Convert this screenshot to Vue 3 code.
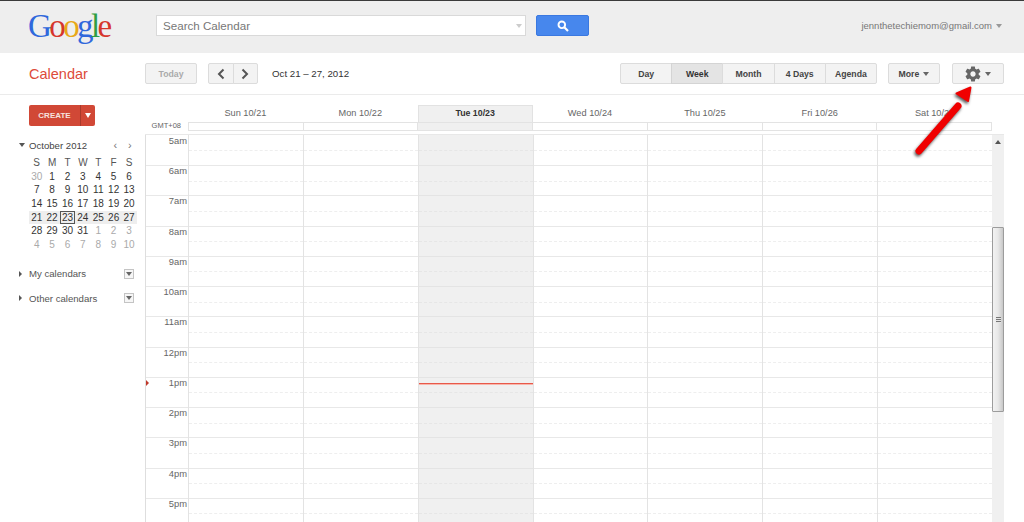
<script setup>
const views = [
  { label: 'Day' },
  { label: 'Week', active: true },
  { label: 'Month' },
  { label: '4 Days' },
  { label: 'Agenda' }
]
const days = ['Sun 10/21', 'Mon 10/22', 'Tue 10/23', 'Wed 10/24', 'Thu 10/25', 'Fri 10/26', 'Sat 10/27']
const hours = ['5am', '6am', '7am', '8am', '9am', '10am', '11am', '12pm', '1pm', '2pm', '3pm', '4pm', '5pm']
const weekLetters = ['S', 'M', 'T', 'W', 'T', 'F', 'S']
const mini = [
  [30, 1, 2, 3, 4, 5, 6],
  [7, 8, 9, 10, 11, 12, 13],
  [14, 15, 16, 17, 18, 19, 20],
  [21, 22, 23, 24, 25, 26, 27],
  [28, 29, 30, 31, 1, 2, 3],
  [4, 5, 6, 7, 8, 9, 10]
]
const isOther = (r, d) => (r === 0 && d > 20) || (r >= 4 && d < 15)
</script>

<template>
  <div class="app">
    <header class="topbar">
      <div class="logo"><span class="b">G</span><span class="r">o</span><span class="y">o</span><span class="b">g</span><span class="g">l</span><span class="r">e</span></div>
      <div class="search">
        <span>Search Calendar</span>
        <i class="search-caret"></i>
      </div>
      <button class="search-btn" aria-label="Search">
        <svg width="12" height="12" viewBox="0 0 12 12"><circle cx="4.8" cy="4.8" r="3.3" fill="none" stroke="#fff" stroke-width="1.9"/><path d="M7.3 7.3 11 11" stroke="#fff" stroke-width="2.2"/></svg>
      </button>
      <div class="account">jennthetechiemom@gmail.com<i class="caret grey"></i></div>
    </header>

    <div class="toolbar">
      <div class="brand">Calendar</div>
      <div class="btn today">Today</div>
      <div class="nav">
        <div class="btn nav-l"><svg width="8" height="12" viewBox="0 0 8 12"><path d="M6.5 1.5 2 6l4.500 4.500" fill="none" stroke="#555" stroke-width="2"/></svg></div>
        <div class="btn nav-r"><svg width="8" height="12" viewBox="0 0 8 12"><path d="M1.500 1.500 6 6l-4.500 4.500" fill="none" stroke="#555" stroke-width="2"/></svg></div>
      </div>
      <div class="range">Oct 21 – 27, 2012</div>
      <div class="views">
        <div v-for="v in views" :key="v.label" class="btn view" :class="{ active: v.active }">{{ v.label }}</div>
      </div>
      <div class="btn more">More<i class="caret"></i></div>
      <div class="btn gear">
        <svg width="16" height="16" viewBox="1.500 1.500 21 21"><path fill="#666" d="M19.430 12.980c.04-.32.07-.64.07-.98s-.03-.66-.07-.98l2.110-1.650c.19-.15.24-.42.12-.64l-2-3.460c-.12-.22-.39-.3-.61-.22l-2.490 1c-.52-.4-1.080-.73-1.690-.98l-.38-2.650C14.460 2.180 14.250 2 14 2h-4c-.25 0-.46.18-.49.42l-.38 2.650c-.61.25-1.170.59-1.690.98l-2.490-1c-.23-.09-.49 0-.61.22l-2 3.460c-.13.22-.07.49.12.64l2.110 1.650c-.04.32-.07.65-.07.98s.03.66.07.98l-2.110 1.650c-.19.15-.24.42-.12.64l2 3.460c.12.22.39.3.61.22l2.490-1c.52.4 1.080.73 1.690.98l.38 2.650c.03.24.24.42.49.42h4c.25 0 .46-.18.49-.42l.38-2.650c.61-.25 1.170-.59 1.690-.98l2.490 1c.23.09.49 0 .61-.22l2-3.460c.12-.22.07-.49-.12-.64l-2.110-1.650zM12 15.500c-1.930 0-3.500-1.570-3.500-3.500s1.570-3.500 3.500-3.500 3.500 1.570 3.500 3.500-1.570 3.500-3.500 3.500z"/></svg>
        <i class="caret"></i>
      </div>
    </div>

    <div class="main">
      <aside class="side">
        <div class="create">
          <span class="create-l">CREATE</span>
          <span class="create-r"><i class="caret white"></i></span>
        </div>
        <div class="mini-head">
          <i class="caret dark"></i>
          <span class="mini-title">October 2012</span>
          <span class="mini-nav">‹</span>
          <span class="mini-nav">›</span>
        </div>
        <div class="mini-row letters">
          <span v-for="(l, i) in weekLetters" :key="i">{{ l }}</span>
        </div>
        <div v-for="(row, r) in mini" :key="r" class="mini-row" :class="{ current: r === 3 }">
          <span v-for="(d, i) in row" :key="i" :class="{ other: isOther(r, d), sel: r === 3 && d === 23 }">{{ d }}</span>
        </div>
        <div class="cal-item first">
          <i class="tri"></i><span>My calendars</span>
          <b class="box"><i class="caret small"></i></b>
        </div>
        <div class="cal-item">
          <i class="tri"></i><span>Other calendars</span>
          <b class="box"><i class="caret small"></i></b>
        </div>
      </aside>

      <section class="week">
        <div class="day-head">
          <div class="gutter"></div>
          <div v-for="(d, i) in days" :key="d" class="day-name" :class="{ now: i === 2 }">{{ d }}</div>
        </div>
        <div class="allday">
          <div class="gutter gmt">GMT+08</div>
          <div class="allday-box">
            <div v-for="(d, i) in days" :key="d" class="allday-cell" :class="{ now: i === 2 }"></div>
          </div>
        </div>
        <div class="body">
          <div class="times">
            <div v-for="h in hours" :key="h" class="time">{{ h }}</div>
            <i class="marker"></i>
          </div>
          <div v-for="(d, i) in days" :key="d" class="col" :class="{ now: i === 2 }">
            <div v-for="h in hours" :key="h" class="hour"></div>
            <div v-if="i === 2" class="nowline"></div>
          </div>
          <div class="scroll">
            <i class="up"></i>
            <div class="thumb"><i class="grip"></i></div>
          </div>
        </div>
      </section>
    </div>

    <svg class="arrow" width="80" height="85" viewBox="0 0 80 85">
      <path d="M14 71 53 26" stroke="#f00000" stroke-width="7" stroke-linecap="round"/>
      <path d="M65.500 7.500 51.500 13.500 63 21Z" fill="#f00000" stroke="#f00000" stroke-width="2" stroke-linejoin="round"/>
    </svg>
  </div>
</template>

<style>
html, body { margin: 0; background: #fff; overflow: hidden; }
</style>

<style scoped>
.app {
  position: relative;
  width: 1024px;
  height: 522px;
  overflow: hidden;
  font-family: "Liberation Sans", Arial, sans-serif;
  font-size: 11px;
  color: #444;
  background: #fff;
}
i { display: block; }

.caret {
  display: inline-block;
  width: 0; height: 0;
  border-left: 3.500px solid transparent;
  border-right: 3.500px solid transparent;
  border-top: 4px solid #666;
}
.caret.grey { border-top-color: #999; margin-left: 4px; vertical-align: 1px; }
.caret.white { border-top-color: #fff; border-top-width: 5px; }
.caret.dark { border-top-color: #555; }
.caret.small { border-left-width: 3px; border-right-width: 3px; border-top-width: 4px; }

.topbar {
  box-sizing: border-box;
  height: 53px;
  border-top: 1px solid #3a3a3a;
  background: #eeeeee;
  display: flex;
  align-items: flex-start;
}
.logo {
  margin: 3px 0 0 28px;
  width: 128px;
  font-family: "Liberation Serif", serif;
  font-size: 33px;
  line-height: 44px;
  letter-spacing: -2.600px;
}
.b { color: #3068dc; } .r { color: #d6362c; } .y { color: #e8a818; } .g { color: #2f9e44; }
.search {
  box-sizing: border-box;
  width: 370px;
  height: 21px;
  margin-top: 14px;
  padding-left: 6px;
  background: #fff;
  border: 1px solid #d9d9d9;
  display: flex;
  align-items: center;
  justify-content: space-between;
  color: #777;
  font-size: 11.600px;
}
.search-caret {
  width: 0; height: 0; margin-right: 3px;
  border-left: 3px solid transparent;
  border-right: 3px solid transparent;
  border-top: 4px solid #ccc;
}
.search-btn {
  width: 53px;
  height: 21px;
  margin: 14px 0 0 10px;
  padding: 0;
  border: 1px solid #3a78e0;
  border-radius: 2px;
  background: #4787ed;
  display: flex;
  align-items: center;
  justify-content: center;
}
.account {
  margin: 18px 0 0 auto;
  padding-right: 22px;
  font-size: 9.500px;
  line-height: 13px;
  color: #777;
}

.toolbar {
  box-sizing: border-box;
  height: 42px;
  border-bottom: 1px solid #ebebeb;
  display: flex;
  align-items: flex-start;
  padding-top: 10px;
}
.brand {
  width: 116px;
  margin-left: 29px;
  font-size: 14.500px;
  line-height: 22px;
  color: #dd4b39;
}
.btn {
  box-sizing: border-box;
  height: 21px;
  border: 1px solid #dcdcdc;
  border-radius: 2px;
  background: #f3f3f3;
  display: flex;
  align-items: center;
  justify-content: center;
  font-size: 8.700px;
  font-weight: bold;
  color: #444;
}
.today { width: 52px; color: #aaa; }
.nav { display: flex; margin-left: 11px; }
.nav-l { width: 25.500px; border-radius: 2px 0 0 2px; }
.nav-r { width: 25px; margin-left: -1px; border-radius: 0 2px 2px 0; }
.range { width: 348px; margin-left: 14.500px; line-height: 21px; color: #333; font-size: 9.700px; }
.views { display: flex; }
.view { width: 52.200px; margin-left: -1px; border-radius: 0; }
.view:first-child { margin-left: 0; border-radius: 2px 0 0 2px; }
.view:last-child { border-radius: 0 2px 2px 0; }
.view.active { background: #e4e4e4; border-color: #d4d4d4; color: #333; }
.more { width: 52px; margin-left: 11px; gap: 4px; }
.gear { width: 52px; margin-left: 12px; gap: 4px; }

.main { display: flex; height: 428px; }

.side { box-sizing: border-box; width: 145px; padding: 10px 0 0 29px; flex: none; }
.create { display: flex; width: 66px; height: 21px; }
.create-l {
  box-sizing: border-box;
  width: 51px;
  background: #d14836;
  border-radius: 2px 0 0 2px;
  color: #f6e3df;
  font-weight: bold;
  font-size: 8px;
  line-height: 21px;
  text-align: center;
}
.create-r {
  flex: 1;
  background: #d14836;
  border-left: 1px solid #a93a2b;
  border-radius: 0 2px 2px 0;
  display: flex;
  align-items: center;
  justify-content: center;
}
.mini-head {
  display: flex;
  align-items: center;
  width: 118px;
  height: 14px;
  margin: 12px 0 4px -10px;
  color: #444;
  font-size: 9.600px;
}
.mini-head .caret { margin-right: 4px; }
.mini-title { flex: 1; }
.mini-nav { width: 14.500px; text-align: center; color: #777; font-size: 11px; line-height: 14px; }
.mini-row {
  display: grid;
  grid-template-columns: repeat(7, 15.400px);
  width: 108px;
  height: 13.700px;
  line-height: 13.700px;
  text-align: center;
  font-size: 10px;
  color: #333;
}
.mini-row.current { background: #eeeeee; }
.mini-row.letters { color: #555; }
.mini-row .other { color: #aaa; }
.mini-row .sel { outline: 1px solid #555; outline-offset: -1px; }
.cal-item {
  display: flex;
  align-items: center;
  width: 115px;
  height: 14px;
  margin: 10.500px 0 0 -10px;
  color: #555;
  font-size: 9.600px;
}
.cal-item.first { margin-top: 15px; }
.tri {
  width: 0; height: 0; margin-right: 7px;
  border-top: 3.500px solid transparent;
  border-bottom: 3.500px solid transparent;
  border-left: 3.500px solid #555;
}
.cal-item span { flex: 1; }
.box {
  box-sizing: border-box;
  width: 10px; height: 10px;
  border: 1px solid #c4c4c4;
  background: #f6f6f6;
  display: flex;
  align-items: center;
  justify-content: center;
}

.week { flex: none; width: 859px; position: relative; }
.gutter { width: 43px; flex: none; }
.day-head { display: flex; height: 27px; }
.day-name {
  box-sizing: border-box;
  width: 114.860px;
  margin-top: 10px;
  text-align: center;
  font-size: 9.200px;
  line-height: 17px;
  color: #666;
}
.day-name.now {
  background: #f0f0f0;
  border: 1px solid #e2e2e2;
  border-bottom: 0;
  color: #333;
  font-size: 8.800px;
  font-weight: bold;
  line-height: 15px;
}
.allday { display: flex; height: 12px; }
.gmt { font-size: 7.500px; line-height: 8px; color: #666; text-align: right; padding-right: 7px; box-sizing: border-box; }
.allday-box {
  box-sizing: border-box;
  width: 804px;
  height: 9px;
  border: 1px solid #e3e3e3;
  display: flex;
}
.allday-cell { flex: 1; border-left: 1px solid #e3e3e3; }
.allday-cell:first-child { border-left: 0; }
.allday-cell.now { background: #f0f0f0; }

.body {
  display: flex;
  height: 389px;
  overflow: hidden;
  position: relative;
  border-top: 1px solid #e8e8e8;
  box-sizing: border-box;
}
.times {
  box-sizing: border-box;
  width: 43px;
  flex: none;
  border-left: 1px solid #dedede;
  position: relative;
}
.time {
  box-sizing: border-box;
  height: 30.250px;
  border-top: 1px solid #e8e8e8;
  padding: 0 1px 0 0;
  text-align: right;
  font-size: 9.400px;
  line-height: 10px;
  color: #666;
}
.time:first-child { height: 30px; border-top: 0; padding-top: 1px; }
.marker {
  position: absolute;
  left: 0;
  top: 245px;
  width: 0; height: 0;
  border-top: 3px solid transparent;
  border-bottom: 3px solid transparent;
  border-left: 3px solid #c0392b;
}
.col {
  box-sizing: border-box;
  width: 114.860px;
  flex: none;
  border-left: 1px solid #e3e3e3;
  position: relative;
}
.col.now { background: #f0f0f0; }
.hour {
  box-sizing: border-box;
  height: 30.250px;
  border-top: 1px solid #e8e8e8;
  position: relative;
}
.hour:first-child { height: 30px; border-top: 0; }
.hour::after {
  content: "";
  position: absolute;
  left: 0; right: 0; top: 14.500px;
  border-top: 1px dashed #eeeeee;
}
.col.now .hour { border-top-color: #e4e4e4; }
.col.now .hour::after { border-top-color: #e6e6e6; }
.nowline {
  position: absolute;
  z-index: 1;
  left: 0; right: 0; top: 248px;
  height: 1px;
  background: #e8594a;
  box-shadow: 0 1px 0 #f8b6ac;
}
.scroll {
  box-sizing: border-box;
  width: 12px;
  flex: none;
  background: #f0f0f0;
  padding-top: 92px;
  position: relative;
}
.up {
  position: absolute;
  left: 3px; top: 5px;
  width: 0; height: 0;
  border-left: 3px solid transparent;
  border-right: 3px solid transparent;
  border-bottom: 4px solid #555;
}
.thumb {
  box-sizing: border-box;
  height: 185px;
  border: 1px solid #9c9c9c;
  border-radius: 1px;
  background: linear-gradient(90deg, #f2f2f2, #e8e8e8 50%, #c8c8c8);
  display: flex;
  align-items: center;
  justify-content: center;
}
.grip {
  width: 5px; height: 6px;
  background: repeating-linear-gradient(180deg, #777 0 1px, #e5e5e5 1px 2px);
}
.arrow {
  position: absolute;
  left: 905px;
  top: 80px;
  filter: drop-shadow(-1px 2px 1.500px rgba(0,0,0,.65));
}
</style>
